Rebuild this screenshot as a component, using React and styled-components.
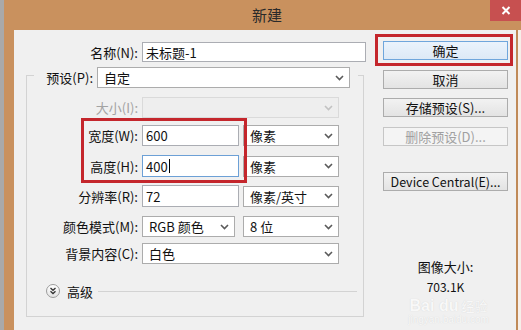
import React from "react";
import styled, { createGlobalStyle } from "styled-components";

const GlobalStyle = createGlobalStyle`
  html, body { margin: 0; padding: 0; }
  body {
    width: 521px; height: 330px; overflow: hidden;
    font-family: "Noto Sans CJK SC", "Noto Sans", sans-serif;
    color: #111;
  }
`;

const Window = styled.div`
  display: flex;
  width: 521px;
  height: 330px;
  padding-left: 4px;
  box-sizing: border-box;
  background: #a9a9a9;
`;

const Frame = styled.div`
  flex: 1;
  display: flex;
  flex-direction: column;
  background: #c9915e;
`;

const TitleBar = styled.div`
  height: 30px;
  display: grid;
  grid-template-columns: 1fr auto 1fr;
  align-items: start;
  padding-left: 9px;
  flex-shrink: 0;
`;

const Title = styled.div`
  grid-column: 2;
  line-height: 30px;
  font-size: 15px;
  color: #2a2a2a;
`;

const CloseButton = styled.div`
  grid-column: 3;
  justify-self: end;
  width: 31px;
  height: 21px;
  background: #c75050;
  display: flex;
  align-items: center;
  justify-content: center;
`;

const LowerRow = styled.div`
  flex: 1;
  display: flex;
  padding-left: 10px;
  min-height: 0;
`;

const Client = styled.div`
  width: 502px;
  background: #f0f0f0;
  display: flex;
`;

const RightEdge = styled.div`
  flex: 1;
  border-left: 2px solid #c08a58;
  background: #f7efe9;
`;

const LeftPanel = styled.div`
  width: 369px;
  padding-top: 12px;
  display: flex;
  flex-direction: column;
`;

const Row = styled.div`
  display: flex;
  align-items: center;
  height: ${(p) => p.$h || 21}px;
  margin-top: ${(p) => p.$mt || 0}px;
`;

const Label = styled.div`
  width: ${(p) => p.$w}px;
  flex-shrink: 0;
  text-align: right;
  font-size: 13px;
  white-space: nowrap;
  padding-right: 4px;
  box-sizing: border-box;
  color: ${(p) => (p.$disabled ? "#a3a3a3" : "#111")};
`;

const TextInput = styled.div`
  width: ${(p) => p.$w}px;
  height: ${(p) => p.$h || 21}px;
  box-sizing: border-box;
  background: #fff;
  border: 1px solid ${(p) => (p.$focused ? "#6ca0d6" : "#abadb3")};
  padding-left: 3px;
  font-size: 13px;
  display: flex;
  align-items: center;
  white-space: nowrap;
`;

const Caret = styled.span`
  display: inline-block;
  width: 1px;
  height: 14px;
  background: #000;
  margin-left: 1px;
`;

const SelectBox = styled.div`
  width: ${(p) => p.$w}px;
  height: ${(p) => p.$h || 21}px;
  margin-left: ${(p) => p.$ml || 0}px;
  box-sizing: border-box;
  background: ${(p) => (p.$disabled ? "#eeeeee" : "#fff")};
  border: 1px solid ${(p) => (p.$disabled ? "#dadada" : "#acacac")};
  padding: 0 5px 0 6px;
  font-size: 13px;
  display: flex;
  align-items: center;
  justify-content: space-between;
  white-space: nowrap;
  flex-shrink: 0;
`;

const Chevron = ({ color = "#555" }) => (
  <svg width="9" height="6" viewBox="0 0 9 6">
    <polyline points="1,1 4.5,4.5 8,1" fill="none" stroke={color} strokeWidth="1.6" />
  </svg>
);

const Select = ({ w, ml, h, disabled, children }) => (
  <SelectBox $w={w} $ml={ml} $h={h} $disabled={disabled}>
    <span>{children}</span>
    <Chevron color={disabled ? "#c2c2c2" : "#5a5a5a"} />
  </SelectBox>
);

const NameRow = styled(Row)`
  height: 20px;
`;

const Group = styled.div`
  position: relative;
  margin: 13px 0 0 12px;
  width: 338px;
  box-sizing: border-box;
  border: 1px solid #d3d3d3;
  padding-bottom: 17px;
  display: flex;
  flex-direction: column;
`;

const PresetRow = styled(Row)`
  margin: -9px 5px 0 7px;
  padding-right: 6px;
  background: #f0f0f0;
`;

const Highlight = styled.div`
  position: absolute;
  left: ${(p) => p.$x}px;
  top: ${(p) => p.$y}px;
  width: ${(p) => p.$w}px;
  height: ${(p) => p.$h}px;
  border: 3px solid #c4262c;
  box-sizing: border-box;
  pointer-events: none;
`;

const AdvancedRow = styled.div`
  display: flex;
  align-items: center;
  height: 16px;
  margin-top: 19px;
  padding-left: 19px;
  padding-right: 6px;
  gap: 7px;
  font-size: 13px;
`;

const AdvIcon = styled.div`
  width: 14px;
  height: 14px;
  border-radius: 50%;
  box-sizing: border-box;
  border: 1px solid #9c9c9c;
  background: linear-gradient(#ffffff, #e4e4e4);
  display: flex;
  align-items: center;
  justify-content: center;
`;

const Rule = styled.div`
  flex: 1;
  height: 1px;
  background: #d3d3d3;
  margin-left: -2px;
`;

const RightPanel = styled.div`
  position: relative;
  width: 125px;
  padding-top: 11px;
  display: flex;
  flex-direction: column;
  align-items: stretch;
`;

const Button = styled.div`
  height: 19px;
  margin-top: ${(p) => p.$mt || 0}px;
  box-sizing: border-box;
  border: 1px solid ${(p) => (p.$default ? "#6fa6dc" : p.$disabled ? "#c6c6c6" : "#acacac")};
  background: ${(p) =>
    p.$default
      ? "linear-gradient(#eaf3fc, #dde9f6)"
      : p.$disabled
      ? "#f4f4f4"
      : "linear-gradient(#f2f2f2, #e3e3e3)"};
  color: ${(p) => (p.$disabled ? "#a0a0a0" : "#111")};
  font-size: ${(p) => p.$fs || 13}px;
  display: flex;
  align-items: center;
  justify-content: center;
  white-space: nowrap;
`;

const InfoText = styled.div`
  text-align: center;
  font-size: ${(p) => p.$fs}px;
  line-height: 18px;
  margin-top: ${(p) => p.$mt}px;
  color: #111;
`;

const Watermark = styled.div`
  position: absolute;
  left: 8px;
  top: 267px;
  display: flex;
  flex-direction: column;
  align-items: center;
  width: 115px;
  color: #f8f8f8;
  text-shadow: 0 0 1px #d0d0d0;
  pointer-events: none;
`;

const WmMain = styled.div`
  font-family: "Liberation Sans", sans-serif;
  font-weight: bold;
  font-size: 16px;
  line-height: 17px;
  display: flex;
  gap: 3px;
  align-items: baseline;
`;

const WmSmall = styled.span`
  font-family: "Noto Sans CJK SC", sans-serif;
  font-size: 13px;
  font-weight: normal;
`;

const WmUrl = styled.div`
  font-family: "Liberation Sans", sans-serif;
  font-size: 10px;
  line-height: 11px;
`;

export default function App() {
  return (
    <>
      <GlobalStyle />
      <Window>
        <Frame>
          <TitleBar>
            <Title>新建</Title>
            <CloseButton>
              <svg width="10" height="9" viewBox="0 0 10 9">
                <path d="M1.5 1 L8.5 8 M8.5 1 L1.5 8" stroke="#fff" strokeWidth="2" />
              </svg>
            </CloseButton>
          </TitleBar>
          <LowerRow>
            <Client>
              <LeftPanel>
                <NameRow>
                  <Label $w={128}>名称(N):</Label>
                  <TextInput $w={224} $h={20}>未标题-1</TextInput>
                </NameRow>
                <Group>
                  <PresetRow>
                    <Label $w={63}>预设(P):</Label>
                    <Select w={253}>自定</Select>
                  </PresetRow>
                  <Row $mt={9}>
                    <Label $w={115} $disabled>大小(I):</Label>
                    <Select w={197} disabled>{""}</Select>
                  </Row>
                  <Row $mt={7}>
                    <Label $w={115}>宽度(W):</Label>
                    <TextInput $w={97}>600</TextInput>
                    <Select w={96} ml={4}>像素</Select>
                  </Row>
                  <Row $mt={9} $h={22}>
                    <Label $w={115}>高度(H):</Label>
                    <TextInput $w={97} $h={22} $focused>
                      400<Caret />
                    </TextInput>
                    <Select w={96} ml={4}>像素</Select>
                  </Row>
                  <Row $mt={8} $h={22}>
                    <Label $w={115}>分辨率(R):</Label>
                    <TextInput $w={97} $h={22}>72</TextInput>
                    <Select w={96} ml={4}>像素/英寸</Select>
                  </Row>
                  <Row $mt={9}>
                    <Label $w={115}>颜色模式(M):</Label>
                    <Select w={93}>RGB 颜色</Select>
                    <Select w={96} ml={8}>8 位</Select>
                  </Row>
                  <Row $mt={6}>
                    <Label $w={115}>背景内容(C):</Label>
                    <Select w={197}>白色</Select>
                  </Row>
                  <AdvancedRow>
                    <AdvIcon>
                      <svg width="8" height="8" viewBox="0 0 8 8">
                        <polyline points="1.5,1 4,3.3 6.5,1" fill="none" stroke="#333" strokeWidth="1.3" />
                        <polyline points="1.5,4.3 4,6.6 6.5,4.3" fill="none" stroke="#333" strokeWidth="1.3" />
                      </svg>
                    </AdvIcon>
                    <span>高级</span>
                    <Rule />
                  </AdvancedRow>
                  <Highlight $x={54} $y={42} $w={166} $h={65} />
                </Group>
              </LeftPanel>
              <RightPanel>
                <Button $default>确定</Button>
                <Button $mt={10}>取消</Button>
                <Button $mt={9}>存储预设(S)...</Button>
                <Button $mt={10} $disabled>删除预设(D)...</Button>
                <Button $mt={26} $fs={12.5}>Device Central(E)...</Button>
                <InfoText $fs={13} $mt={67}>图像大小:</InfoText>
                <InfoText $fs={12} $mt={2}>703.1K</InfoText>
                <Watermark>
                  <WmMain>
                    Bai du<WmSmall>经验</WmSmall>
                  </WmMain>
                  <WmUrl>jingyan.baidu.com</WmUrl>
                </Watermark>
                <Highlight $x={-8} $y={4} $w={138} $h={32} />
              </RightPanel>
            </Client>
            <RightEdge />
          </LowerRow>
        </Frame>
      </Window>
    </>
  );
}
